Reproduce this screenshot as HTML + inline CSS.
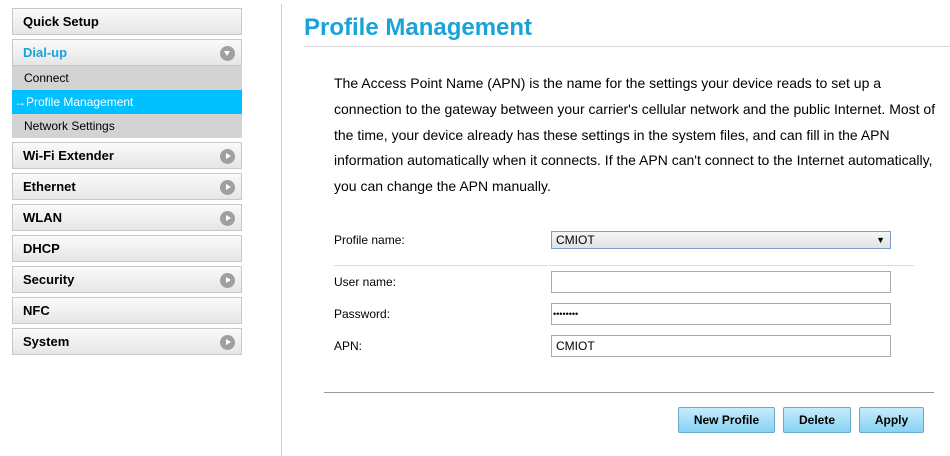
<!DOCTYPE html>
<html><head><meta charset="utf-8"><style>
*{margin:0;padding:0;box-sizing:border-box}
body{width:950px;height:456px;background:#fff;font-family:"Liberation Sans",Arial,sans-serif;position:relative;overflow:hidden;color:#000}
.m{position:absolute;left:12px;width:230px;height:27px;border:1px solid #c8c8c8;background:linear-gradient(#fafafa,#e6e6e6);font-weight:bold;font-size:13px;line-height:25px;padding-left:10px}
.ic{position:absolute;right:6px;top:5.5px;width:15px;height:15px;border-radius:50%;background:#a0a0a0}
.ic.r:after{content:"";position:absolute;left:5.5px;top:4px;border-left:5px solid #fff;border-top:3.5px solid transparent;border-bottom:3.5px solid transparent}
.ic.d:after{content:"";position:absolute;left:4px;top:5.5px;border-top:5px solid #fff;border-left:3.5px solid transparent;border-right:3.5px solid transparent}
.s{position:absolute;left:12px;width:230px;height:24px;background:#d3d3d3;font-size:12px;line-height:24px;padding-left:12px}
.lbl{position:absolute;left:334px;font-size:12px}
.in{position:absolute;left:551px;width:340px;height:22px;border:1px solid #aaa;background:#fff;font-size:12px;line-height:20px;padding-left:4px}
.b{position:absolute;top:407px;height:26px;border:1px solid #6aa8c8;border-radius:2px;background:linear-gradient(#c6ecfb,#86d2f3);font-weight:bold;font-size:12px;line-height:24px;text-align:center}
</style></head><body>
<div class="m" style="top:8px">Quick Setup</div>
<div class="m" style="top:39px;color:#1aa3d8">Dial-up<span class="ic d"></span></div>
<div class="s" style="top:66px">Connect</div>
<div class="s" style="top:90px;background:#00c0ff;color:#fff;padding-left:2px"><span style="font-size:12px">→</span>Profile Management</div>
<div class="s" style="top:114px">Network Settings</div>
<div class="m" style="top:142px">Wi-Fi Extender<span class="ic r"></span></div>
<div class="m" style="top:173px">Ethernet<span class="ic r"></span></div>
<div class="m" style="top:204px">WLAN<span class="ic r"></span></div>
<div class="m" style="top:235px">DHCP</div>
<div class="m" style="top:266px">Security<span class="ic r"></span></div>
<div class="m" style="top:297px">NFC</div>
<div class="m" style="top:328px">System<span class="ic r"></span></div>
<div style="position:absolute;left:281px;top:4px;width:1px;height:452px;background:#d0d0d0"></div>
<div style="position:absolute;left:304px;top:14px;font-size:24px;font-weight:bold;color:#1aa3d8">Profile Management</div>
<div style="position:absolute;left:304px;top:46px;width:646px;height:1px;background:#d8d8d8"></div>
<div style="position:absolute;left:334px;top:71px;width:604px;font-size:14px;line-height:25.8px">The Access Point Name (APN) is the name for the settings your device reads to set up a connection to the gateway between your carrier's cellular network and the public Internet. Most of the time, your device already has these settings in the system files, and can fill in the APN information automatically when it connects. If the APN can't connect to the Internet automatically, you can change the APN manually.</div>
<div class="lbl" style="top:233px">Profile name:</div>
<div class="in" style="top:231px;height:18px;line-height:16px;border-color:#7a9cc8;background:linear-gradient(#f6f6f6,#e2e2e2);font-size:12px">CMIOT<span style="position:absolute;right:5px;font-size:9px">▼</span></div>
<div style="position:absolute;left:334px;top:265px;width:580px;height:1px;background:#ddd"></div>
<div class="lbl" style="top:275px">User name:</div>
<div class="in" style="top:271px"></div>
<div class="lbl" style="top:307px">Password:</div>
<div class="in" style="top:303px;font-size:9px;padding-left:1px">••••••••</div>
<div class="lbl" style="top:339px">APN:</div>
<div class="in" style="top:335px">CMIOT</div>
<div style="position:absolute;left:324px;top:392px;width:610px;height:1px;background:#999"></div>
<div class="b" style="left:678px;width:97px">New Profile</div>
<div class="b" style="left:783px;width:68px">Delete</div>
<div class="b" style="left:859px;width:65px">Apply</div>
</body></html>
